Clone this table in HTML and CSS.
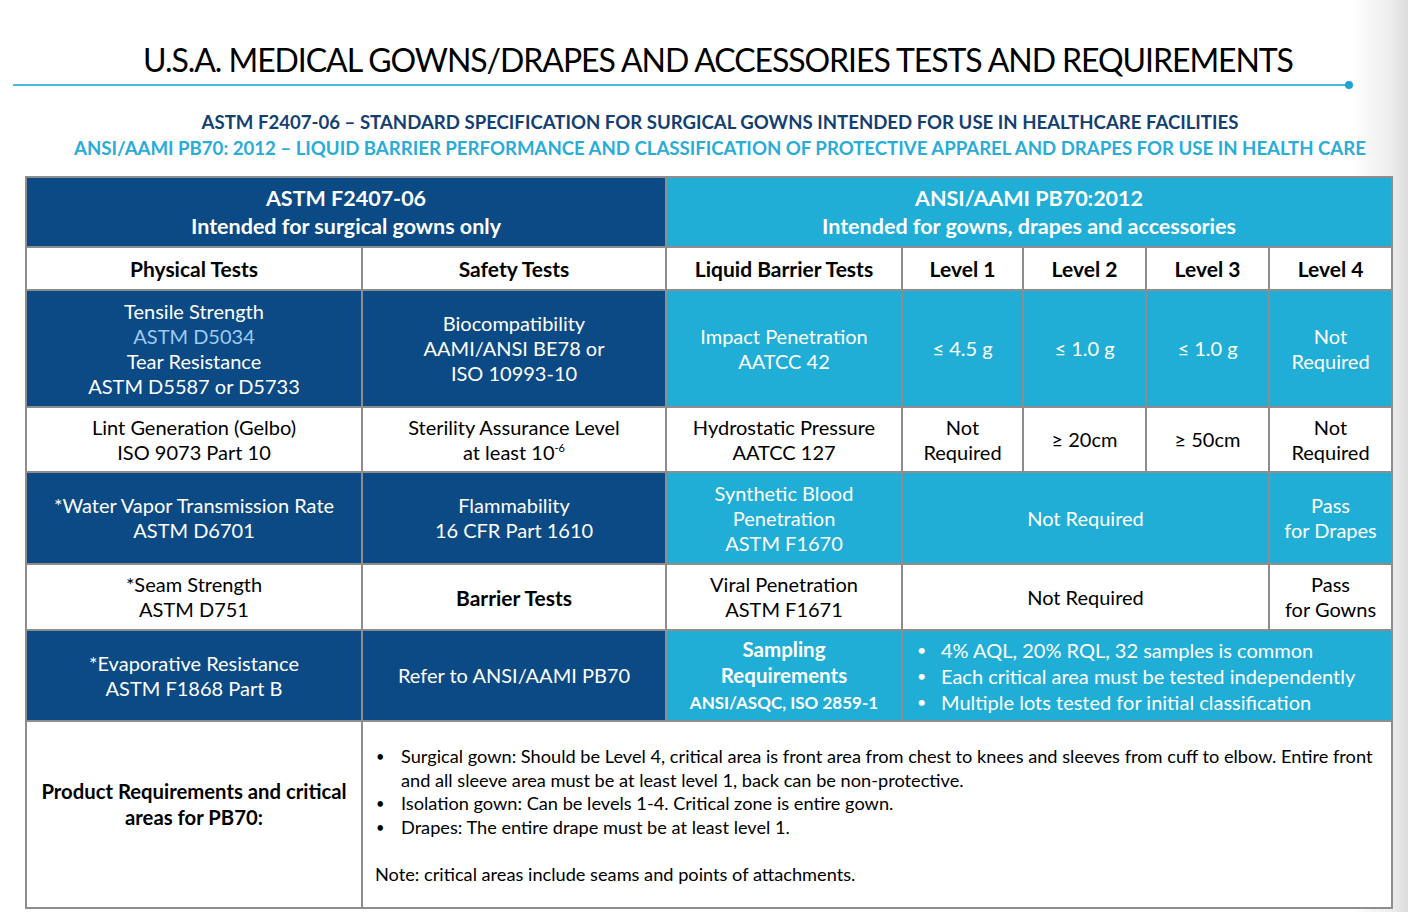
FILE: index.html
```html
<!DOCTYPE html>
<html>
<head>
<meta charset="utf-8">
<link rel="stylesheet" href="styles.css">
</head>
<body>
<div class="page">
  <header class="head">
    <h1 class="title">U.S.A. MEDICAL GOWNS/DRAPES AND ACCESSORIES TESTS AND REQUIREMENTS</h1>
    <div class="rule"></div>
    <p class="sub sub-dark">ASTM F2407-06 – STANDARD SPECIFICATION FOR SURGICAL GOWNS INTENDED FOR USE IN HEALTHCARE FACILITIES</p>
    <p class="sub sub-light">ANSI/AAMI PB70: 2012 – LIQUID BARRIER PERFORMANCE AND CLASSIFICATION OF PROTECTIVE APPAREL AND DRAPES FOR USE IN HEALTH CARE</p>
  </header>
  <table class="grid">
    <colgroup>
      <col class="c1"><col class="c2"><col class="c3"><col class="c4"><col class="c5"><col class="c6"><col class="c7">
    </colgroup>
    <tr class="r-head">
      <th colspan="2" class="dark">ASTM F2407-06<br>Intended for surgical gowns only</th>
      <th colspan="5" class="light">ANSI/AAMI PB70:2012<br>Intended for gowns, drapes and accessories</th>
    </tr>
    <tr class="r-sub">
      <th>Physical Tests</th>
      <th>Safety Tests</th>
      <th>Liquid Barrier Tests</th>
      <th>Level 1</th>
      <th>Level 2</th>
      <th>Level 3</th>
      <th>Level 4</th>
    </tr>
    <tr class="r1">
      <td class="dark">Tensile Strength<br><span class="hl">ASTM D5034</span><br>Tear Resistance<br>ASTM D5587 or D5733</td>
      <td class="dark">Biocompatibility<br>AAMI/ANSI BE78 or<br>ISO 10993-10</td>
      <td class="light">Impact Penetration<br>AATCC 42</td>
      <td class="light">≤ 4.5 g</td>
      <td class="light">≤ 1.0 g</td>
      <td class="light">≤ 1.0 g</td>
      <td class="light">Not<br>Required</td>
    </tr>
    <tr class="r2">
      <td>Lint Generation (Gelbo)<br>ISO 9073 Part 10</td>
      <td>Sterility Assurance Level<br>at least 10<sup>-6</sup></td>
      <td>Hydrostatic Pressure<br>AATCC 127</td>
      <td>Not<br>Required</td>
      <td>≥ 20cm</td>
      <td>≥ 50cm</td>
      <td>Not<br>Required</td>
    </tr>
    <tr class="r3">
      <td class="dark">*Water Vapor Transmission Rate<br>ASTM D6701</td>
      <td class="dark">Flammability<br>16 CFR Part 1610</td>
      <td class="light">Synthetic Blood<br>Penetration<br>ASTM F1670</td>
      <td colspan="3" class="light">Not Required</td>
      <td class="light">Pass<br>for Drapes</td>
    </tr>
    <tr class="r4">
      <td>*Seam Strength<br>ASTM D751</td>
      <td class="bold big-bold">Barrier Tests</td>
      <td>Viral Penetration<br>ASTM F1671</td>
      <td colspan="3">Not Required</td>
      <td>Pass<br>for Gowns</td>
    </tr>
    <tr class="r5">
      <td class="dark">*Evaporative Resistance<br>ASTM F1868 Part B</td>
      <td class="dark">Refer to ANSI/AAMI PB70</td>
      <td class="light bold samp">Sampling<br>Requirements<br><span class="samp-sm">ANSI/ASQC, ISO 2859-1</span></td>
      <td colspan="4" class="light list-cell">
        <ul class="blist big">
          <li>4% AQL, 20% RQL, 32 samples is common</li>
          <li>Each critical area must be tested independently</li>
          <li>Multiple lots tested for initial classification</li>
        </ul>
      </td>
    </tr>
    <tr class="r6">
      <td class="bold prod">Product Requirements and critical<br>areas for PB70:</td>
      <td colspan="6" class="notes">
        <ul class="blist small">
          <li>Surgical gown: Should be Level 4, critical area is front area from chest to knees and sleeves from cuff to elbow. Entire front and all sleeve area must be at least level 1, back can be non-protective.</li>
          <li>Isolation gown: Can be levels 1-4. Critical zone is entire gown.</li>
          <li>Drapes: The entire drape must be at least level 1.</li>
        </ul>
        <p class="note">Note: critical areas include seams and points of attachments.</p>
      </td>
    </tr>
  </table>
</div>
</body>
</html>
```
FILE: styles.css
```css
html, body {
  margin: 0;
  padding: 0;
}
body {
  width: 1408px;
  height: 912px;
  overflow: hidden;
  background: linear-gradient(to right, #ffffff 0px, #ffffff 1352px, #ececec 1392px, #dcdcdc 1408px);
  font-family: Lato, "Open Sans", sans-serif;
  color: #000;
}
.page {
  padding-top: 38px;
}
.head {
  padding-left: 32px;
  text-align: center;
}
.title {
  margin: 0 0 0 -4px;
  font-weight: 400;
  font-size: 32px;
  line-height: 44px;
  letter-spacing: -1.05px;
  color: #000;
}
.rule {
  position: relative;
  margin: 2px 0 0 -19px;
  width: 1337px;
  height: 2px;
  background: #4cb9de;
}
.rule::after {
  content: "";
  position: absolute;
  right: -3px;
  top: -3px;
  width: 8px;
  height: 8px;
  border-radius: 50%;
  background: #1fa3d4;
}
.sub {
  margin: 0;
  font-weight: 700;
  font-size: 18.6px;
  line-height: 26px;
}
.sub-dark {
  margin-top: 23px;
  color: #143f73;
}
.sub-light {
  color: #29acd8;
}
.grid {
  margin: 15px 0 0 25px;
  border-collapse: collapse;
  table-layout: fixed;
  width: 1366px;
}
.c1 { width: 336px; }
.c2 { width: 304px; }
.c3 { width: 236px; }
.c4 { width: 121px; }
.c5 { width: 123px; }
.c6 { width: 123px; }
.c7 { width: 123px; }
.grid th, .grid td {
  border: 2px solid #8d8d8d;
  padding: 0 4px;
  text-align: center;
  vertical-align: middle;
  font-size: 20px;
  line-height: 25px;
  background: #fff;
  color: #000;
}
.grid th {
  font-weight: 700;
  font-size: 21px;
}
.r-head { height: 70px; }
.r-sub { height: 43px; }
.r1 { height: 117px; }
.r2 { height: 65px; }
.r3 { height: 92px; }
.r4 { height: 66px; }
.r5 { height: 91px; }
.r6 { height: 187px; }
.grid .r-head th {
  line-height: 28px;
  font-size: 21.5px;
}
.grid .dark {
  background: #0b4a84;
  color: #fff;
}
.grid .light {
  background: #20aed6;
  color: #fff;
}
.grid .bold {
  font-weight: 700;
}
.grid .big-bold {
  font-size: 21px;
}
.grid .prod {
  padding-bottom: 22px;
  font-size: 20.3px;
  line-height: 26px;
}
.hl {
  color: #9ecbf3;
}
.grid sup {
  font-size: 11px;
  line-height: 0;
  vertical-align: 8px;
}
.grid .samp {
  font-size: 20.5px;
  line-height: 26px;
}
.samp-sm {
  font-size: 17px;
}
.grid .list-cell {
  text-align: left;
  padding-left: 12px;
}
.blist {
  margin: 0;
  padding: 0;
  list-style: none;
}
.blist li {
  position: relative;
}
.blist li::before {
  content: "•";
  position: absolute;
  font-size: 0.8em;
}
.blist.big li {
  padding-left: 26px;
  font-size: 20px;
  line-height: 26px;
}
.blist.big li::before {
  left: 2px;
}
.grid .notes {
  text-align: left;
  padding: 23px 12px 20px 12px;
  vertical-align: top;
}
.blist.small li {
  padding-left: 26px;
  font-size: 18.2px;
  line-height: 23.5px;
}
.blist.small li::before {
  left: 1px;
}
.note {
  margin: 23px 0 0 0;
  font-size: 18.2px;
  line-height: 24px;
}
```
